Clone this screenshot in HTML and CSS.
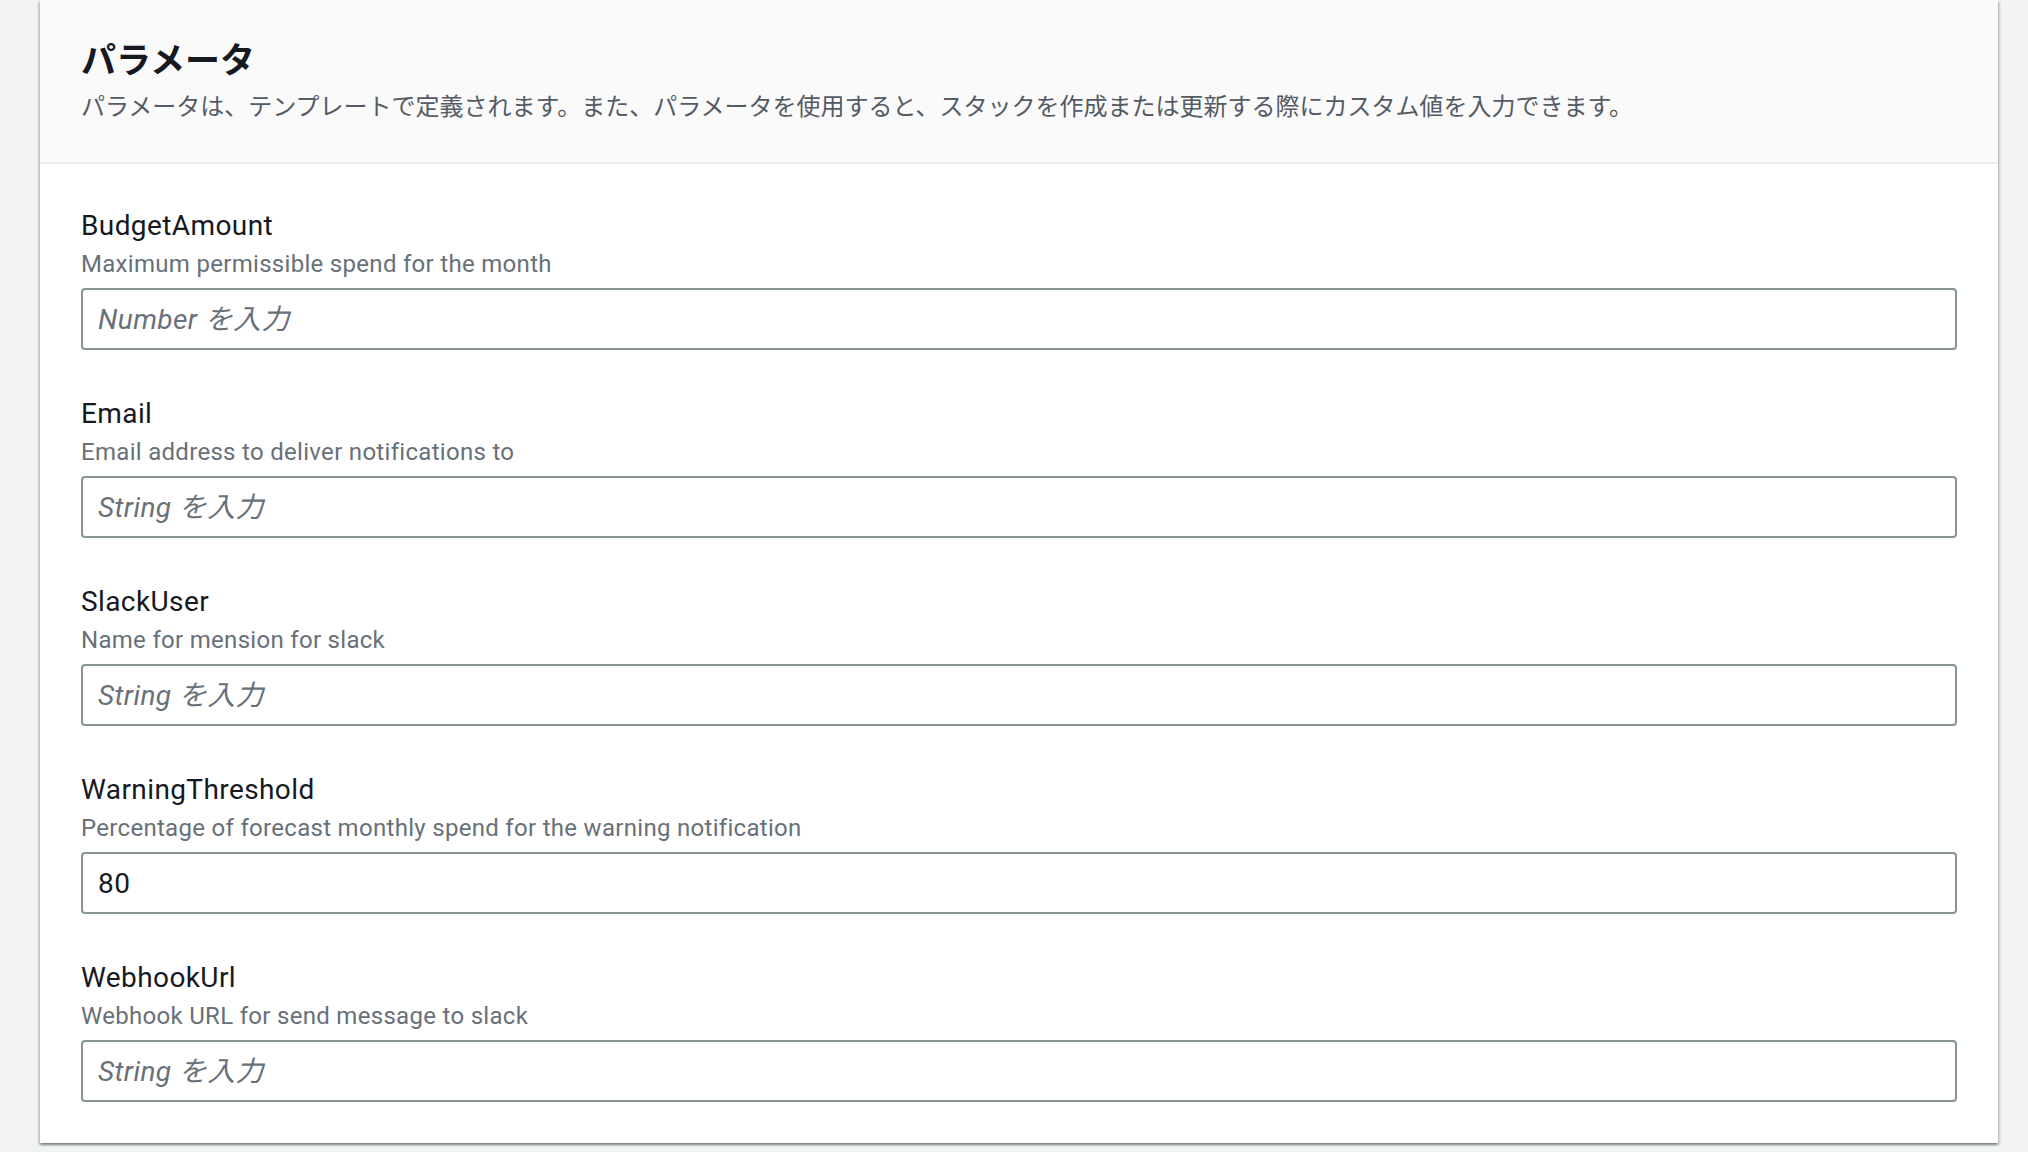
FILE: index.html
```html
<!DOCTYPE html>
<html lang="ja">
<head>
<meta charset="utf-8">
<title>パラメータ</title>
<link rel="stylesheet" href="styles.css">
</head>
<body>
<div class="page">
  <section class="panel">
    <header class="panel-header">
      <h2 class="panel-title">パラメータ</h2>
      <p class="panel-desc">パラメータは、テンプレートで定義されます。また、パラメータを使用すると、スタックを作成または更新する際にカスタム値を入力できます。</p>
    </header>
    <div class="panel-body">
      <div class="field">
        <label class="field-label" for="p1">BudgetAmount</label>
        <div class="field-desc">Maximum permissible spend for the month</div>
        <input class="field-input" id="p1" type="text" placeholder="Number を入力">
      </div>
      <div class="field">
        <label class="field-label" for="p2">Email</label>
        <div class="field-desc">Email address to deliver notifications to</div>
        <input class="field-input" id="p2" type="text" placeholder="String を入力">
      </div>
      <div class="field">
        <label class="field-label" for="p3">SlackUser</label>
        <div class="field-desc">Name for mension for slack</div>
        <input class="field-input" id="p3" type="text" placeholder="String を入力">
      </div>
      <div class="field">
        <label class="field-label" for="p4">WarningThreshold</label>
        <div class="field-desc">Percentage of forecast monthly spend for the warning notification</div>
        <input class="field-input" id="p4" type="text" value="80">
      </div>
      <div class="field">
        <label class="field-label" for="p5">WebhookUrl</label>
        <div class="field-desc">Webhook URL for send message to slack</div>
        <input class="field-input" id="p5" type="text" placeholder="String を入力">
      </div>
    </div>
  </section>
</div>
</body>
</html>
```
FILE: styles.css
```css
* { box-sizing: border-box; }
html, body {
  margin: 0;
  padding: 0;
  background: #f2f3f3;
  font-family: Roboto, "Noto Sans CJK JP", sans-serif;
  color: #16191f;
}
.page {
  padding: 0 30px 8px 40px;
}
.panel {
  background: #ffffff;
  box-shadow: 0 2px 2px 0 rgba(0, 28, 36, 0.3), 2px 2px 2px 0 rgba(0, 28, 36, 0.15), -2px 2px 2px 0 rgba(0, 28, 36, 0.15);
}
.panel-header {
  background: #fafafa;
  border-bottom: 2px solid #eaeded;
  padding: 36px 41px 41px;
}
.panel-title {
  margin: 0;
  font-family: "Noto Sans CJK JP", sans-serif;
  font-size: 35px;
  line-height: 44px;
  font-weight: 700;
  color: #16191f;
}
.panel-desc {
  margin: 9px 0 0;
  font-family: "Noto Sans CJK JP", sans-serif;
  font-size: 24px;
  line-height: 32px;
  color: #545b64;
}
.panel-body {
  padding: 42px 41px 41px;
  display: flex;
  flex-direction: column;
  gap: 44px;
}
.field {
  display: flex;
  flex-direction: column;
}
.field-label {
  font-size: 28px;
  line-height: 40px;
  letter-spacing: 0.4px;
  color: #16191f;
}
.field-desc {
  margin-top: 2px;
  font-size: 24px;
  line-height: 32px;
  letter-spacing: 0.3px;
  color: #687078;
}
.field-input {
  margin-top: 8px;
  height: 62px;
  width: 100%;
  border: 2px solid #879596;
  border-radius: 4px;
  padding: 0 14px 0 15px;
  background: #ffffff;
  font-family: Roboto, "Noto Sans CJK JP", sans-serif;
  font-size: 28px;
  letter-spacing: 0.4px;
  color: #16191f;
  outline: none;
}
.field-input::placeholder {
  color: #687078;
  font-style: italic;
  opacity: 1;
}
```
